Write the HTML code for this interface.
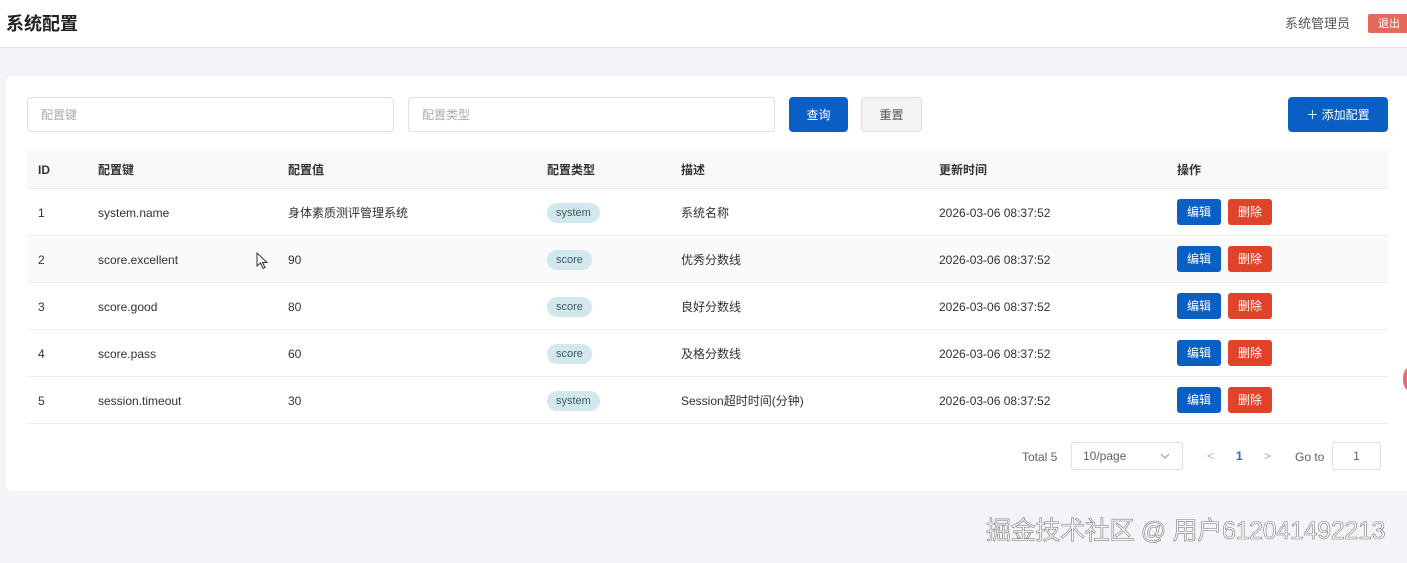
<!DOCTYPE html>
<html><head><meta charset="utf-8"><style>
*{box-sizing:border-box;margin:0;padding:0}
body{width:1407px;height:563px;background:#f3f4f7;font-family:"Liberation Sans","Noto Sans CJK SC",sans-serif;color:#303133;position:relative;overflow:hidden;font-size:12px;line-height:16px}
.hd{position:absolute;left:0;top:0;width:1407px;height:48px;background:#fff;border-bottom:1px solid #e4e6eb}
.hd h1{position:absolute;left:6px;top:12px;font-size:18px;line-height:24px;font-weight:bold;color:#222}
.user{position:absolute;left:1285px;top:14px;font-size:13px;line-height:20px;color:#555}
.out{position:absolute;left:1368px;top:14px;width:40px;height:19px;background:#e36a5a;color:#fff;font-size:11px;padding-left:10px;border-radius:2px;display:flex;align-items:center}
.card{position:absolute;left:6px;top:76px;width:1410px;height:415px;background:#fff;border-radius:6px}
.in{position:absolute;top:97px;height:35px;border:1px solid #dcdfe6;border-radius:4px;background:#fff;color:#a8abb2;font-size:12px;padding-left:13px;display:flex;align-items:center}
.btn{position:absolute;top:97px;height:35px;border-radius:4px;font-size:12px;display:flex;align-items:center;justify-content:center}
.th{position:absolute;left:27px;top:151px;width:1361px;height:38px;background:#f7f8fa;border-bottom:1px solid #ebeef5}
.row{position:absolute;left:27px;width:1361px;height:47px;border-bottom:1px solid #ebeef5}
.c{position:absolute;font-size:12px;white-space:nowrap;height:16px;display:flex;align-items:center}
.hdc{font-weight:bold;color:#333;top:11px}
.rc{top:16px;color:#303133}
.tag{position:absolute;top:14px;height:20px;border-radius:10px;background:#d3e8ec;color:#3a5a66;font-size:11px;padding:0 9px;display:flex;align-items:center}
.e,.d{position:absolute;top:10px;width:44px;height:26px;border-radius:3px;color:#fff;font-size:12px;display:flex;align-items:center;justify-content:center}
.e{left:1150px;background:#0a5fc4}.d{left:1201px;background:#e0422a}
.wm{position:absolute;left:986px;top:515px;font-size:25px;line-height:32px;color:#fff;-webkit-text-stroke:0.6px #777;letter-spacing:-0.3px;white-space:nowrap}
</style></head><body>
<div class="hd"><h1>系统配置</h1><div class="user">系统管理员</div><div class="out">退出</div></div>
<div class="card"></div>
<div class="in" style="left:27px;width:367px">配置键</div>
<div class="in" style="left:408px;width:367px">配置类型</div>
<div class="btn" style="left:789px;width:59px;background:#0a5fc4;color:#fff">查询</div>
<div class="btn" style="left:861px;width:61px;background:#f2f3f5;border:1px solid #dcdfe6;color:#555">重置</div>
<div class="btn" style="left:1288px;width:100px;background:#0a5fc4;color:#fff">＋ 添加配置</div>
<div class="th">
<div class="c hdc" style="left:11px">ID</div><div class="c hdc" style="left:71px">配置键</div><div class="c hdc" style="left:261px">配置值</div><div class="c hdc" style="left:520px">配置类型</div><div class="c hdc" style="left:654px">描述</div><div class="c hdc" style="left:912px">更新时间</div><div class="c hdc" style="left:1150px">操作</div>
</div>
<div class="row" style="top:189px"><div class="c rc" style="left:11px">1</div><div class="c rc" style="left:71px">system.name</div><div class="c rc" style="left:261px">身体素质测评管理系统</div><div class="tag" style="left:520px">system</div><div class="c rc" style="left:654px">系统名称</div><div class="c rc" style="left:912px">2026-03-06 08:37:52</div><div class="e">编辑</div><div class="d">删除</div></div>
<div class="row" style="top:236px;background:#fafafa"><div class="c rc" style="left:11px">2</div><div class="c rc" style="left:71px">score.excellent</div><div class="c rc" style="left:261px">90</div><div class="tag" style="left:520px">score</div><div class="c rc" style="left:654px">优秀分数线</div><div class="c rc" style="left:912px">2026-03-06 08:37:52</div><div class="e">编辑</div><div class="d">删除</div></div>
<div class="row" style="top:283px"><div class="c rc" style="left:11px">3</div><div class="c rc" style="left:71px">score.good</div><div class="c rc" style="left:261px">80</div><div class="tag" style="left:520px">score</div><div class="c rc" style="left:654px">良好分数线</div><div class="c rc" style="left:912px">2026-03-06 08:37:52</div><div class="e">编辑</div><div class="d">删除</div></div>
<div class="row" style="top:330px"><div class="c rc" style="left:11px">4</div><div class="c rc" style="left:71px">score.pass</div><div class="c rc" style="left:261px">60</div><div class="tag" style="left:520px">score</div><div class="c rc" style="left:654px">及格分数线</div><div class="c rc" style="left:912px">2026-03-06 08:37:52</div><div class="e">编辑</div><div class="d">删除</div></div>
<div class="row" style="top:377px"><div class="c rc" style="left:11px">5</div><div class="c rc" style="left:71px">session.timeout</div><div class="c rc" style="left:261px">30</div><div class="tag" style="left:520px">system</div><div class="c rc" style="left:654px">Session超时时间(分钟)</div><div class="c rc" style="left:912px">2026-03-06 08:37:52</div><div class="e">编辑</div><div class="d">删除</div></div>
<svg style="position:absolute;left:256px;top:252px" width="14" height="18" viewBox="0 0 14 18"><path d="M1 1 L1 14 L4.5 11 L7 16.5 L9 15.5 L6.5 10.5 L11 10.5 Z" fill="#fff" stroke="#333" stroke-width="1"/></svg>
<div class="c" style="left:1022px;top:449px;color:#606266">Total 5</div>
<div style="position:absolute;left:1071px;top:442px;width:112px;height:28px;border:1px solid #dcdfe6;border-radius:3px;font-size:12px;padding-left:11px;color:#606266;display:flex;align-items:center">10/page<svg style="position:absolute;right:12px;top:10px" width="10" height="6" viewBox="0 0 10 6"><path d="M1 1 L5 5 L9 1" fill="none" stroke="#999" stroke-width="1"/></svg></div>
<div class="c" style="left:1207px;top:448px;color:#aaa">&lt;</div>
<div class="c" style="left:1236px;top:448px;color:#2a6fc0;font-weight:bold">1</div>
<div class="c" style="left:1264px;top:448px;color:#aaa">&gt;</div>
<div class="c" style="left:1295px;top:449px;color:#606266">Go to</div>
<div style="position:absolute;left:1332px;top:442px;width:49px;height:28px;border:1px solid #dcdfe6;border-radius:3px;font-size:12px;color:#606266;display:flex;align-items:center;justify-content:center">1</div>
<div style="position:absolute;left:1403px;top:368px;width:10px;height:22px;border-radius:50%;background:#d9707a"></div>
<div class="wm">掘金技术社区 @ 用户612041492213</div>
</body></html>
